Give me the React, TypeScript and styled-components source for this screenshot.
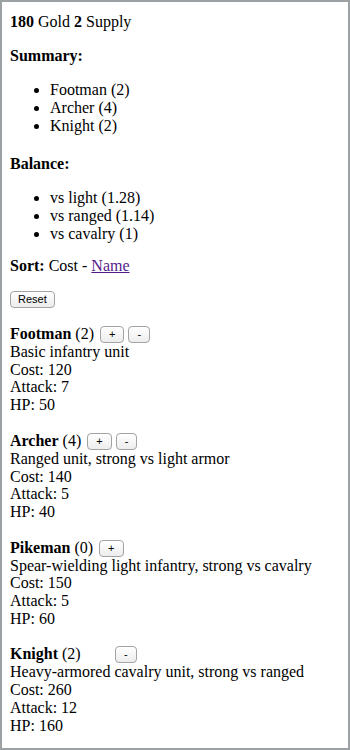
import React from "react";
import styled, { createGlobalStyle } from "styled-components";

const Global = createGlobalStyle`
  html, body { margin: 0; padding: 0; background: #fff; }
  body { font-family: "Liberation Serif", "Times New Roman", serif; font-size: 16px; color: #000; }
`;

const Frame = styled.div`
  box-sizing: border-box;
  width: 350px;
  height: 750px;
  border: 2px solid #9ca1a3;
  padding: 11px 8px 8px;
  overflow: hidden;
`;

const Line = styled.div``;

const Para = styled.p<{ $top?: number }>`
  margin: ${(p) => p.$top ?? 16}px 0 16px;
`;

const List = styled.ul<{ $bottom?: number }>`
  margin: 16px 0 ${(p) => p.$bottom ?? 16}px;
  padding-left: 40px;
`;

const Link = styled.a`
  color: #551a8b;
  text-decoration: underline;
  cursor: pointer;
`;

const Button = styled.button<{ $hidden?: boolean }>`
  font-family: "Liberation Sans", Arial, sans-serif;
  font-size: 11px;
  height: 17px;
  line-height: 13px;
  padding: 0 8px;
  margin: 0 2px;
  border: 1px solid #a3a3a3;
  border-radius: 4px;
  background: linear-gradient(#ffffff, #ededed);
  color: #000;
  vertical-align: 1px;
  visibility: ${(p) => (p.$hidden ? "hidden" : "visible")};
`;

const ResetRow = styled.div`
  margin: 16px 0;
  height: 16px;
`;

const ResetButton = styled(Button)`
  display: block;
  margin: 0;
  padding: 0 7px;
`;

const Unit = styled.div`
  margin: 17px 0;
`;

const UnitHead = styled.div`
  line-height: 19px;
`;

const UnitLine = styled.div`
  line-height: 17.7px;
`;

type U = { name: string; count: number; desc: string; cost: number; attack: number; hp: number; plus: boolean; minus: boolean };

const units: U[] = [
  { name: "Footman", count: 2, desc: "Basic infantry unit", cost: 120, attack: 7, hp: 50, plus: true, minus: true },
  { name: "Archer", count: 4, desc: "Ranged unit, strong vs light armor", cost: 140, attack: 5, hp: 40, plus: true, minus: true },
  { name: "Pikeman", count: 0, desc: "Spear-wielding light infantry, strong vs cavalry", cost: 150, attack: 5, hp: 60, plus: true, minus: false },
  { name: "Knight", count: 2, desc: "Heavy-armored cavalry unit, strong vs ranged", cost: 260, attack: 12, hp: 160, plus: false, minus: true },
];

export default function App() {
  return (
    <>
      <Global />
      <Frame>
        <Line>
          <b>180</b> Gold <b>2</b> Supply
        </Line>
        <Para>
          <b>Summary:</b>
        </Para>
        <List>
          <li>Footman (2)</li>
          <li>Archer (4)</li>
          <li>Knight (2)</li>
        </List>
        <Para $top={20}>
          <b>Balance:</b>
        </Para>
        <List $bottom={14}>
          <li>vs light (1.28)</li>
          <li>vs ranged (1.14)</li>
          <li>vs cavalry (1)</li>
        </List>
        <Para $top={14}>
          <b>Sort:</b> Cost - <Link>Name</Link>
        </Para>
        <ResetRow>
          <ResetButton>Reset</ResetButton>
        </ResetRow>
        {units.map((u) => (
          <Unit key={u.name}>
            <UnitHead>
              <b>{u.name}</b> ({u.count}){" "}
              {u.plus || u.minus ? <Button $hidden={!u.plus}>+</Button> : null}
              {u.minus ? <Button>-</Button> : null}
            </UnitHead>
            <UnitLine>{u.desc}</UnitLine>
            <UnitLine>Cost: {u.cost}</UnitLine>
            <UnitLine>Attack: {u.attack}</UnitLine>
            <UnitLine>HP: {u.hp}</UnitLine>
          </Unit>
        ))}
      </Frame>
    </>
  );
}
